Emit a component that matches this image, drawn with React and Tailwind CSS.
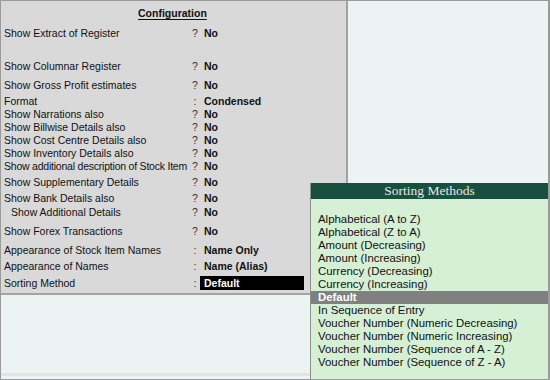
import React from 'react';

const rows = [
  { label: 'Show Extract of Register', sep: '?', value: 'No', mt: 'mt-[7px]' },
  { label: 'Show Columnar Register', sep: '?', value: 'No', mt: 'mt-[20px]' },
  { label: 'Show Gross Profit estimates', sep: '?', value: 'No', mt: 'mt-[6px]' },
  { label: 'Format', sep: ':', value: 'Condensed', mt: 'mt-[3px]' },
  { label: 'Show Narrations also', sep: '?', value: 'No', mt: 'mt-0' },
  { label: 'Show Billwise Details also', sep: '?', value: 'No', mt: 'mt-0' },
  { label: 'Show Cost Centre Details also', sep: '?', value: 'No', mt: 'mt-0' },
  { label: 'Show Inventory Details also', sep: '?', value: 'No', mt: 'mt-0' },
  { label: 'Show additional description of Stock Item', sep: '?', value: 'No', mt: 'mt-0', tight: true },
  { label: 'Show Supplementary Details', sep: '?', value: 'No', mt: 'mt-[3px]' },
  { label: 'Show Bank Details also', sep: '?', value: 'No', mt: 'mt-[3px]' },
  { label: 'Show Additional Details', sep: '?', value: 'No', mt: 'mt-[1px]', indent: true },
  { label: 'Show Forex Transactions', sep: '?', value: 'No', mt: 'mt-[6px]' },
  { label: 'Appearance of Stock Item Names', sep: ':', value: 'Name Only', mt: 'mt-[6px]' },
  { label: 'Appearance of Names', sep: ':', value: 'Name (Alias)', mt: 'mt-[3px]' },
];

const methods = [
  'Alphabetical (A to Z)',
  'Alphabetical (Z to A)',
  'Amount (Decreasing)',
  'Amount (Increasing)',
  'Currency (Decreasing)',
  'Currency (Increasing)',
  'Default',
  'In Sequence of Entry',
  'Voucher Number (Numeric Decreasing)',
  'Voucher Number (Numeric Increasing)',
  'Voucher Number (Sequence of A - Z)',
  'Voucher Number (Sequence of Z - A)',
];

function Row({ label, sep, value, mt, indent, tight }) {
  return (
    <div className={`flex h-[13px] items-center leading-[13px] ${mt}`}>
      <span
        className={`w-[186px] shrink-0 overflow-hidden whitespace-nowrap ${indent ? 'pl-[7px]' : ''} ${
          tight ? 'tracking-[-0.22px]' : ''
        }`}
      >
        {label}
      </span>
      <span className="w-[10px] shrink-0 text-center text-[#333]">{sep}</span>
      <span className="pl-[4px] font-bold">{value}</span>
    </div>
  );
}

export default function App() {
  return (
    <div
      className="relative flex h-[380px] w-[550px] flex-col overflow-hidden border-t border-l border-b border-r-2 border-[#9a9a9a] bg-[#ebf4f2] text-[10.5px] text-[#111]"
      style={{ fontFamily: '"Liberation Sans", Arial, sans-serif' }}
    >
      {/* Configuration panel */}
      <div className="h-[294px] w-[347px] shrink-0 border-r-2 border-b-2 border-[#a3a3a3] bg-[#d9d9d9] pl-[3px] pt-[6px]">
        <div className="h-[13px] pl-[134px] font-bold leading-[13px]">
          <span className="underline decoration-1 underline-offset-2">Configuration</span>
        </div>
        {rows.map((r) => (
          <Row key={r.label} {...r} />
        ))}
        <div className="mt-[3px] flex h-[14px] items-center leading-[14px]">
          <span className="w-[186px] shrink-0">Sorting Method</span>
          <span className="w-[10px] shrink-0 text-center text-[#333]">:</span>
          <span className="h-[14px] w-[104px] bg-black pl-[4px] font-bold text-white">Default</span>
        </div>
      </div>

      <div className="flex-1" />
      <div className="mb-[3px] h-[3px] bg-[#e3e3e3]" />

      {/* Sorting Methods popup */}
      <div className="absolute left-[309px] top-[182px] bottom-0 right-0 border-l border-[#8f8f8f] bg-[#d5f0d5]">
        <div
          className="flex h-[16px] items-center justify-center bg-[#17503f] text-[13.5px] leading-[16px] text-[#e6e6e6]"
          style={{ fontFamily: '"Liberation Serif", "Times New Roman", serif' }}
        >
          Sorting Methods
        </div>
        <div className="pt-[14px] text-[11.4px]">
          {methods.map((m) =>
            m === 'Default' ? (
              <div key={m} className="flex h-[13px] items-center bg-[#808080] pl-[7px] font-bold leading-[13px] text-white">
                {m}
              </div>
            ) : (
              <div key={m} className="h-[13px] whitespace-nowrap pl-[7px] leading-[13px] text-[#111]">
                {m}
              </div>
            )
          )}
        </div>
      </div>
    </div>
  );
}
